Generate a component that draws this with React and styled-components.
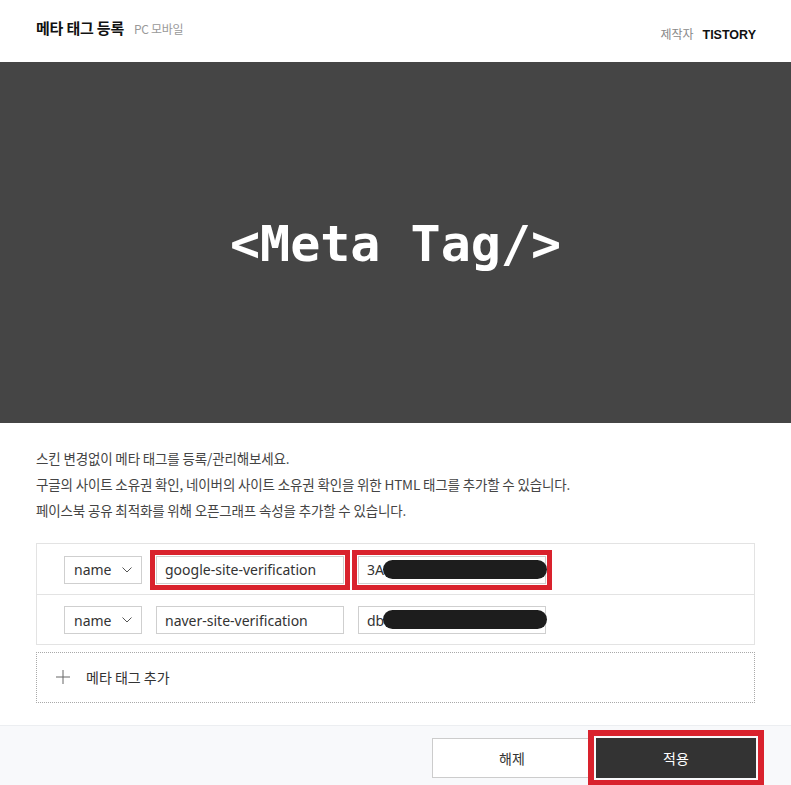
import React from "react";
import styled, { createGlobalStyle, css } from "styled-components";

const GlobalStyle = createGlobalStyle`
  html, body { margin: 0; padding: 0; background: #ffffff; }
  body {
    font-family: "Noto Sans", "Noto Sans CJK KR", sans-serif;
    color: #333;
  }
  * { box-sizing: border-box; }
`;

const marked = css`
  outline: 5px solid #d9222d;
  outline-offset: 1px;
`;

const Page = styled.div`
  width: 100%;
  min-height: 785px;
  display: flex;
  flex-direction: column;
`;

const Header = styled.header`
  height: 62px;
  display: flex;
  justify-content: space-between;
  align-items: flex-start;
  padding: 0 35px 0 36px;
`;

const TitleGroup = styled.div`
  display: flex;
  align-items: baseline;
  gap: 10px;
  padding-top: 17px;
`;

const Title = styled.h1`
  margin: 0;
  font-family: "Noto Sans CJK KR", sans-serif;
  font-size: 15px;
  font-weight: 700;
  letter-spacing: -0.2px;
  color: #111;
`;

const Sub = styled.span`
  font-family: "Noto Sans CJK KR", sans-serif;
  font-size: 12px;
  color: #999;
  letter-spacing: -0.3px;
`;

const Maker = styled.div`
  padding-top: 25px;
  display: flex;
  align-items: baseline;
  gap: 9px;
  font-family: "Noto Sans CJK KR", sans-serif;
  font-size: 12px;
  color: #888;
`;

const MakerName = styled.strong`
  font-family: "Liberation Sans", sans-serif;
  font-size: 12.5px;
  font-weight: 700;
  color: #111;
`;

const Banner = styled.section`
  height: 361px;
  background: #454545;
  display: flex;
  align-items: center;
  justify-content: center;
`;

const BannerText = styled.div`
  font-family: "DejaVu Sans Mono", monospace;
  font-weight: 700;
  font-size: 50px;
  color: #ffffff;
  padding-top: 2px;
`;

const Content = styled.section`
  padding: 22px 36px 0 36px;
`;

const Desc = styled.p`
  margin: 0;
  font-family: "Noto Sans CJK KR", sans-serif;
  font-size: 13.5px;
  line-height: 26px;
  letter-spacing: -0.15px;
  color: #444;
`;

const TagTable = styled.div`
  margin-top: 20px;
  border: 1px solid #e3e3e3;
`;

const TagRow = styled.div`
  height: 50px;
  display: flex;
  align-items: center;
  gap: 14px;
  padding: 1px 0 0 27px;
  & + & {
    border-top: 1px solid #e3e3e3;
  }
`;

const Select = styled.div`
  width: 78px;
  height: 28px;
  border: 1px solid #cfcfcf;
  display: flex;
  align-items: center;
  justify-content: space-between;
  padding: 0 9px 0 9px;
  font-size: 14px;
  color: #333;
`;

const FieldWrap = styled.span`
  position: relative;
  display: inline-block;
  width: 188px;
  height: 28px;
  ${(p) => p.$marked && marked}
`;

const Field = styled.input`
  width: 100%;
  height: 100%;
  border: 1px solid #cfcfcf;
  padding: 0 8px;
  font-family: "Noto Sans", sans-serif;
  font-size: 14px;
  color: #333;
  background: #fff;
  outline: none;
`;

const Redaction = styled.span`
  position: absolute;
  left: 25px;
  top: 4px;
  width: 164px;
  height: 19px;
  border-radius: 10px;
  background: #1d1d1d;
`;

const AddRow = styled.button`
  margin-top: 7px;
  width: 100%;
  height: 51px;
  border: 1px dotted #a9a9a9;
  background: #fff;
  display: flex;
  align-items: center;
  gap: 16px;
  padding: 0 0 2px 19px;
  font-family: "Noto Sans CJK KR", sans-serif;
  font-size: 14px;
  color: #333;
  cursor: pointer;
`;

const Footer = styled.footer`
  margin-top: 22px;
  flex: 1;
  border-top: 1px solid #eceef1;
  background: #f8f9fb;
  display: flex;
  justify-content: flex-end;
  align-items: flex-start;
  gap: 4px;
  padding: 12px 35px 12px;
`;

const Button = styled.button`
  width: 160px;
  height: 40px;
  font-family: "Noto Sans CJK KR", sans-serif;
  font-size: 14px;
  border: 1px solid ${(p) => (p.$primary ? "#333" : "#cccccc")};
  background: ${(p) => (p.$primary ? "#333333" : "#ffffff")};
  color: ${(p) => (p.$primary ? "#ffffff" : "#333")};
  cursor: pointer;
  ${(p) =>
    p.$marked &&
    css`
      outline: 6px solid #d9222d;
      outline-offset: 2px;
    `}
`;

const Chevron = () => (
  <svg width="10" height="6" viewBox="0 0 10 6" fill="none">
    <polyline points="0.5,0.5 5,5 9.5,0.5" stroke="#555" strokeWidth="1" />
  </svg>
);

const Plus = () => (
  <svg width="14" height="14" viewBox="0 0 14 14" fill="none">
    <line x1="7" y1="0" x2="7" y2="14" stroke="#666" strokeWidth="1" />
    <line x1="0" y1="7" x2="14" y2="7" stroke="#666" strokeWidth="1" />
  </svg>
);

const rows = [
  { key: "google-site-verification", value: "3A&", marked: true },
  { key: "naver-site-verification", value: "db", marked: false },
];

export default function App() {
  return (
    <>
      <GlobalStyle />
      <Page>
        <Header>
          <TitleGroup>
            <Title>메타 태그 등록</Title>
            <Sub>PC 모바일</Sub>
          </TitleGroup>
          <Maker>
            제작자 <MakerName>TISTORY</MakerName>
          </Maker>
        </Header>
        <Banner>
          <BannerText>{"<Meta Tag/>"}</BannerText>
        </Banner>
        <Content>
          <Desc>스킨 변경없이 메타 태그를 등록/관리해보세요.</Desc>
          <Desc>
            구글의 사이트 소유권 확인, 네이버의 사이트 소유권 확인을 위한 HTML 태그를 추가할 수 있습니다.
          </Desc>
          <Desc>페이스북 공유 최적화를 위해 오픈그래프 속성을 추가할 수 있습니다.</Desc>
          <TagTable>
            {rows.map((r) => (
              <TagRow key={r.key}>
                <Select>
                  name <Chevron />
                </Select>
                <FieldWrap $marked={r.marked}>
                  <Field defaultValue={r.key} readOnly />
                </FieldWrap>
                <FieldWrap $marked={r.marked}>
                  <Field defaultValue={r.value} readOnly />
                  <Redaction />
                </FieldWrap>
              </TagRow>
            ))}
          </TagTable>
          <AddRow>
            <Plus />
            메타 태그 추가
          </AddRow>
        </Content>
        <Footer>
          <Button>해제</Button>
          <Button $primary $marked>
            적용
          </Button>
        </Footer>
      </Page>
    </>
  );
}
